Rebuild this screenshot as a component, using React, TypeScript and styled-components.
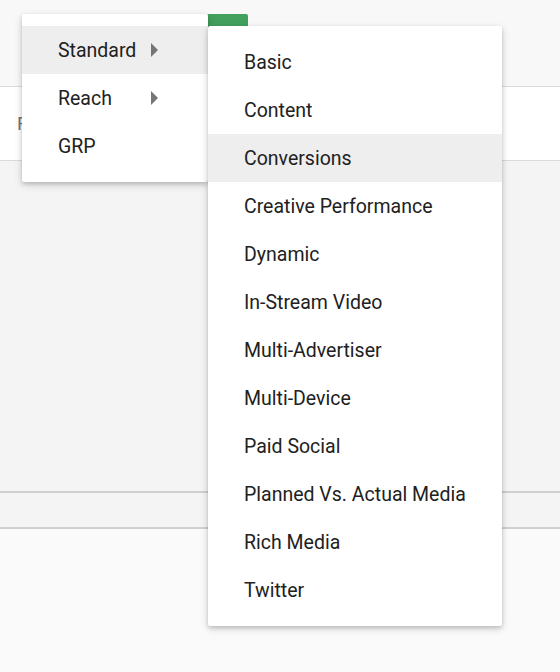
import React from "react";
import styled, { createGlobalStyle } from "styled-components";

const Global = createGlobalStyle`
  html, body { margin: 0; padding: 0; }
  body {
    font-family: Roboto, "Noto Sans", "Liberation Sans", sans-serif;
    background: #fafafa;
    overflow: hidden;
  }
`;

const Page = styled.div`
  position: relative;
  width: 560px;
  height: 672px;
  display: flex;
  flex-direction: column;
  background: #fafafa;
  overflow: hidden;
`;

const TopBar = styled.div`
  height: 87px;
  background: #f8f8f8;
  border-bottom: 1px solid #dcdcdc;
  box-sizing: border-box;
  display: flex;
  align-items: flex-start;
  padding: 14px 0 0 207px;
`;

const GreenButton = styled.button`
  width: 41px;
  height: 36px;
  border: none;
  border-radius: 2px;
  background: #43a05e;
  padding: 0;
`;

const HeaderBand = styled.div`
  height: 74px;
  background: #ffffff;
  border-bottom: 1px solid #dcdcdc;
  box-sizing: border-box;
  display: flex;
  align-items: center;
  padding-left: 17px;
  font-size: 19px;
  color: #757575;
`;

const Body = styled.div`
  height: 332px;
  background: #f4f4f4;
  border-bottom: 2px solid #cfcfcf;
  box-shadow: 0 1px 2px rgba(0, 0, 0, 0.12);
  box-sizing: border-box;
`;

const Footer = styled.div`
  height: 36px;
  background: #f4f4f4;
  border-bottom: 2px solid #d0d0d0;
  box-sizing: border-box;
`;

const Rest = styled.div`
  flex: 1;
  background: #fafafa;
`;

const Menu = styled.ul<{ $left: number; $top: number; $width: number }>`
  position: absolute;
  left: ${(p) => p.$left}px;
  top: ${(p) => p.$top}px;
  width: ${(p) => p.$width}px;
  margin: 0;
  padding: 12px 0;
  list-style: none;
  background: #ffffff;
  border-radius: 2px;
  box-shadow: 0 2px 4px rgba(0, 0, 0, 0.18), 0 3px 10px rgba(0, 0, 0, 0.12);
  box-sizing: border-box;
`;

const Item = styled.li<{ $active?: boolean }>`
  height: 48px;
  display: flex;
  align-items: center;
  padding-left: 36px;
  font-size: 19.5px;
  color: #212121;
  background: ${(p) => (p.$active ? "#eeeeee" : "transparent")};
  white-space: nowrap;
`;

const Label = styled.span`
  width: 93px;
`;

const Arrow = styled.span`
  width: 0;
  height: 0;
  border-left: 7px solid #757575;
  border-top: 7px solid transparent;
  border-bottom: 7px solid transparent;
`;

const mainItems = [
  { label: "Standard", sub: true, active: true },
  { label: "Reach", sub: true },
  { label: "GRP", sub: false },
];

const subItems = [
  "Basic",
  "Content",
  "Conversions",
  "Creative Performance",
  "Dynamic",
  "In-Stream Video",
  "Multi-Advertiser",
  "Multi-Device",
  "Paid Social",
  "Planned Vs. Actual Media",
  "Rich Media",
  "Twitter",
];

export default function App() {
  return (
    <>
      <Global />
      <Page>
        <TopBar>
          <GreenButton aria-label="New" />
        </TopBar>
        <HeaderBand>Filters</HeaderBand>
        <Body />
        <Footer />
        <Rest />

        <Menu $left={22} $top={14} $width={186}>
          {mainItems.map((m) => (
            <Item key={m.label} $active={m.active}>
              <Label>{m.label}</Label>
              {m.sub && <Arrow />}
            </Item>
          ))}
        </Menu>

        <Menu $left={208} $top={26} $width={294}>
          {subItems.map((s) => (
            <Item key={s} $active={s === "Conversions"}>
              {s}
            </Item>
          ))}
        </Menu>
      </Page>
    </>
  );
}
